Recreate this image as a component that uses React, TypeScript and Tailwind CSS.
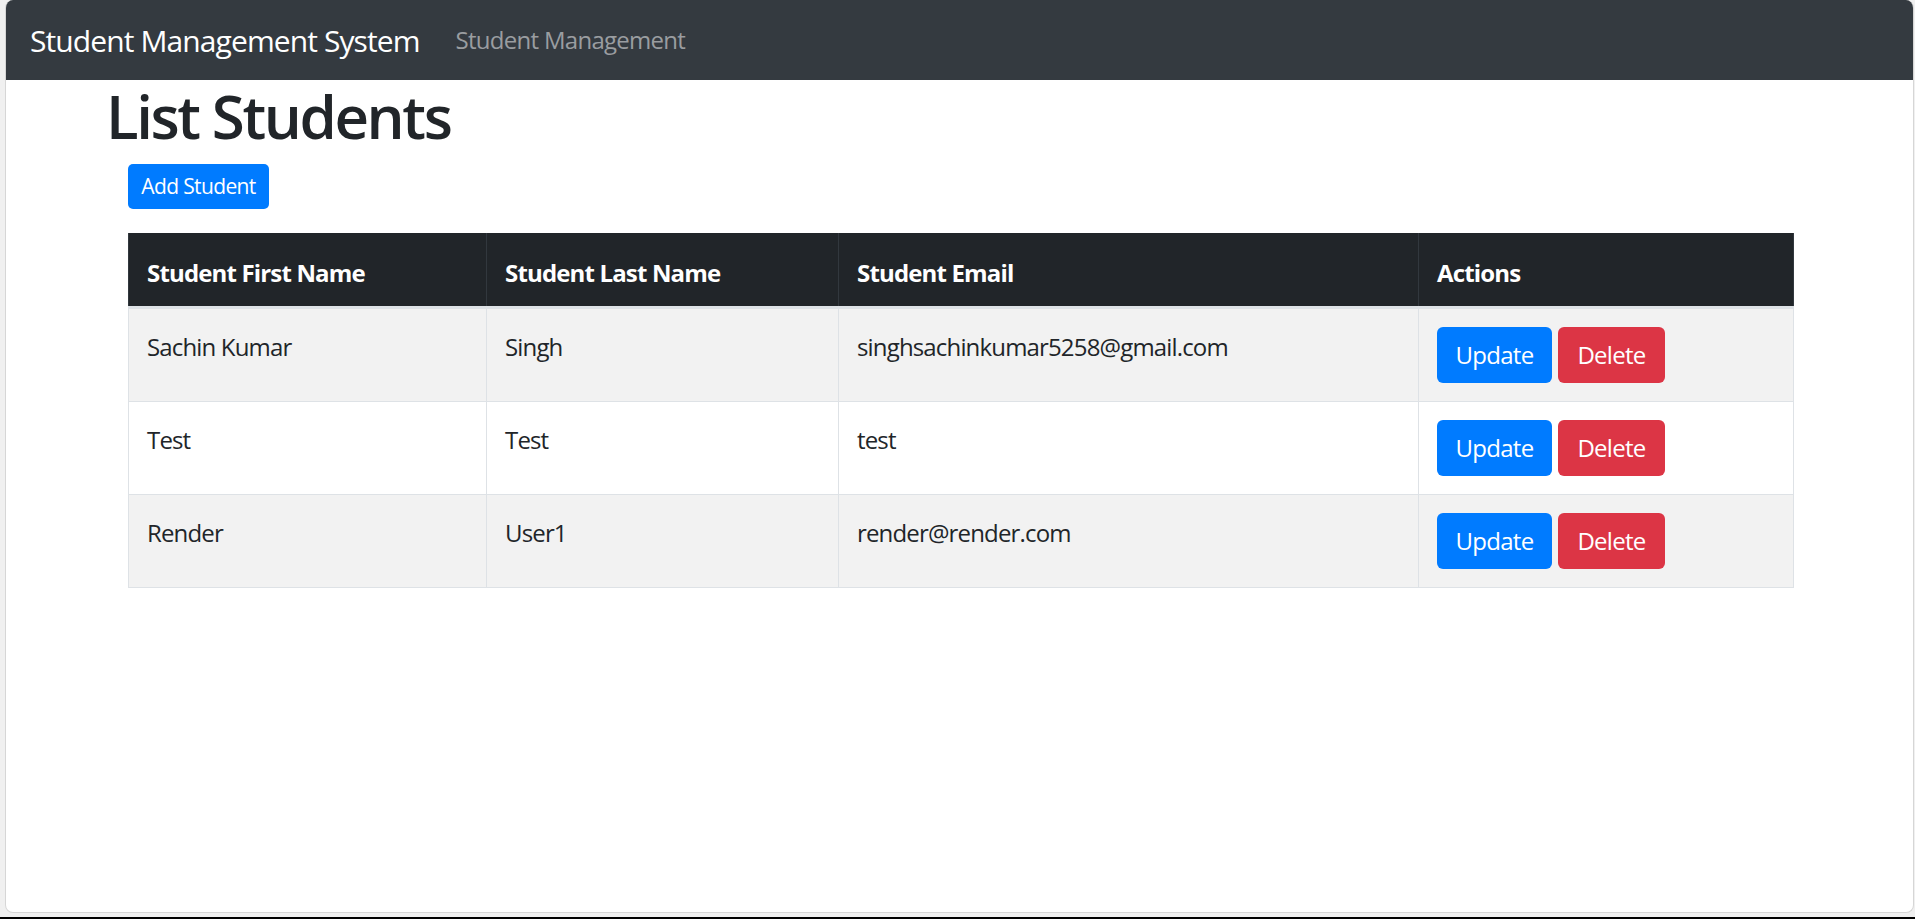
import React from "react";

const rows = [
  { first: "Sachin Kumar", last: "Singh", email: "singhsachinkumar5258@gmail.com" },
  { first: "Test", last: "Test", email: "test" },
  { first: "Render", last: "User1", email: "render@render.com" },
];

export default function App() {
  return (
    <div
      className="h-[919px] w-full bg-[#f0f0f0] flex flex-col overflow-hidden"
      style={{ fontFamily: '"Open Sans", "Noto Sans", Arial, sans-serif' }}
    >
      <div className="flex-1 ml-[5px] mr-[1px] mb-[4px] rounded-[8px] border border-t-0 border-[#d6d6d6] bg-white overflow-hidden flex flex-col">
        <nav className="h-[80px] shrink-0 bg-[#343a40] flex items-center px-[24px]">
          <span className="text-[30px] leading-[45px] text-white mr-[24px] tracking-[-0.03em]">
            Student Management System
          </span>
          <span className="px-[12px] text-[24px] leading-[36px] text-[#9a9da0] tracking-[-0.03em]">
            Student Management
          </span>
        </nav>
        <div className="pl-[122px] flex flex-col">
          <h1 className="-ml-[22px] h-[72px] leading-[72px] text-[60px] font-semibold text-[#212529] tracking-[-0.04em]">
            List Students
          </h1>
          <div className="mt-[12px]">
            <button className="h-[45px] w-[141px] rounded-[5px] bg-[#007bff] text-white text-[21px] leading-[31px] tracking-[-0.03em]">
              Add Student
            </button>
          </div>
          <table className="mt-[24px] w-[1665px] table-fixed border-collapse text-[#212529]">
            <colgroup>
              <col className="w-[358px]" />
              <col className="w-[352px]" />
              <col className="w-[580px]" />
              <col className="w-[375px]" />
            </colgroup>
            <thead>
              <tr className="bg-[#212529] border-b-[3px] border-[#dee2e6]">
                {["Student First Name", "Student Last Name", "Student Email", "Actions"].map((h) => (
                  <th
                    key={h}
                    className="h-[74px] px-[18px] pt-[7px] text-left align-middle text-white text-[24px] leading-[36px] font-bold tracking-[-0.035em] border-x border-[#32383e]"
                  >
                    {h}
                  </th>
                ))}
              </tr>
            </thead>
            <tbody>
              {rows.map((r, i) => (
                <tr key={i} className={i % 2 === 0 ? "bg-[#f2f2f2]" : "bg-white"}>
                  {[r.first, r.last, r.email].map((c, j) => (
                    <td
                      key={j}
                      className="px-[18px] pt-[20px] pb-[16px] align-top text-[24px] leading-[36px] tracking-[-0.035em] border border-[#dee2e6]"
                    >
                      {c}
                    </td>
                  ))}
                  <td className="px-[18px] pt-[18px] pb-[18px] align-top border border-[#dee2e6]">
                    <div className="flex gap-[6px]">
                      <button className="h-[56px] w-[115px] rounded-[6px] bg-[#007bff] text-white text-[24px] leading-[36px] tracking-[-0.03em]">
                        Update
                      </button>
                      <button className="h-[56px] w-[107px] rounded-[6px] bg-[#dc3545] text-white text-[24px] leading-[36px] tracking-[-0.03em]">
                        Delete
                      </button>
                    </div>
                  </td>
                </tr>
              ))}
            </tbody>
          </table>
        </div>
      </div>
      <div className="h-[2px] shrink-0 bg-black" />
    </div>
  );
}
